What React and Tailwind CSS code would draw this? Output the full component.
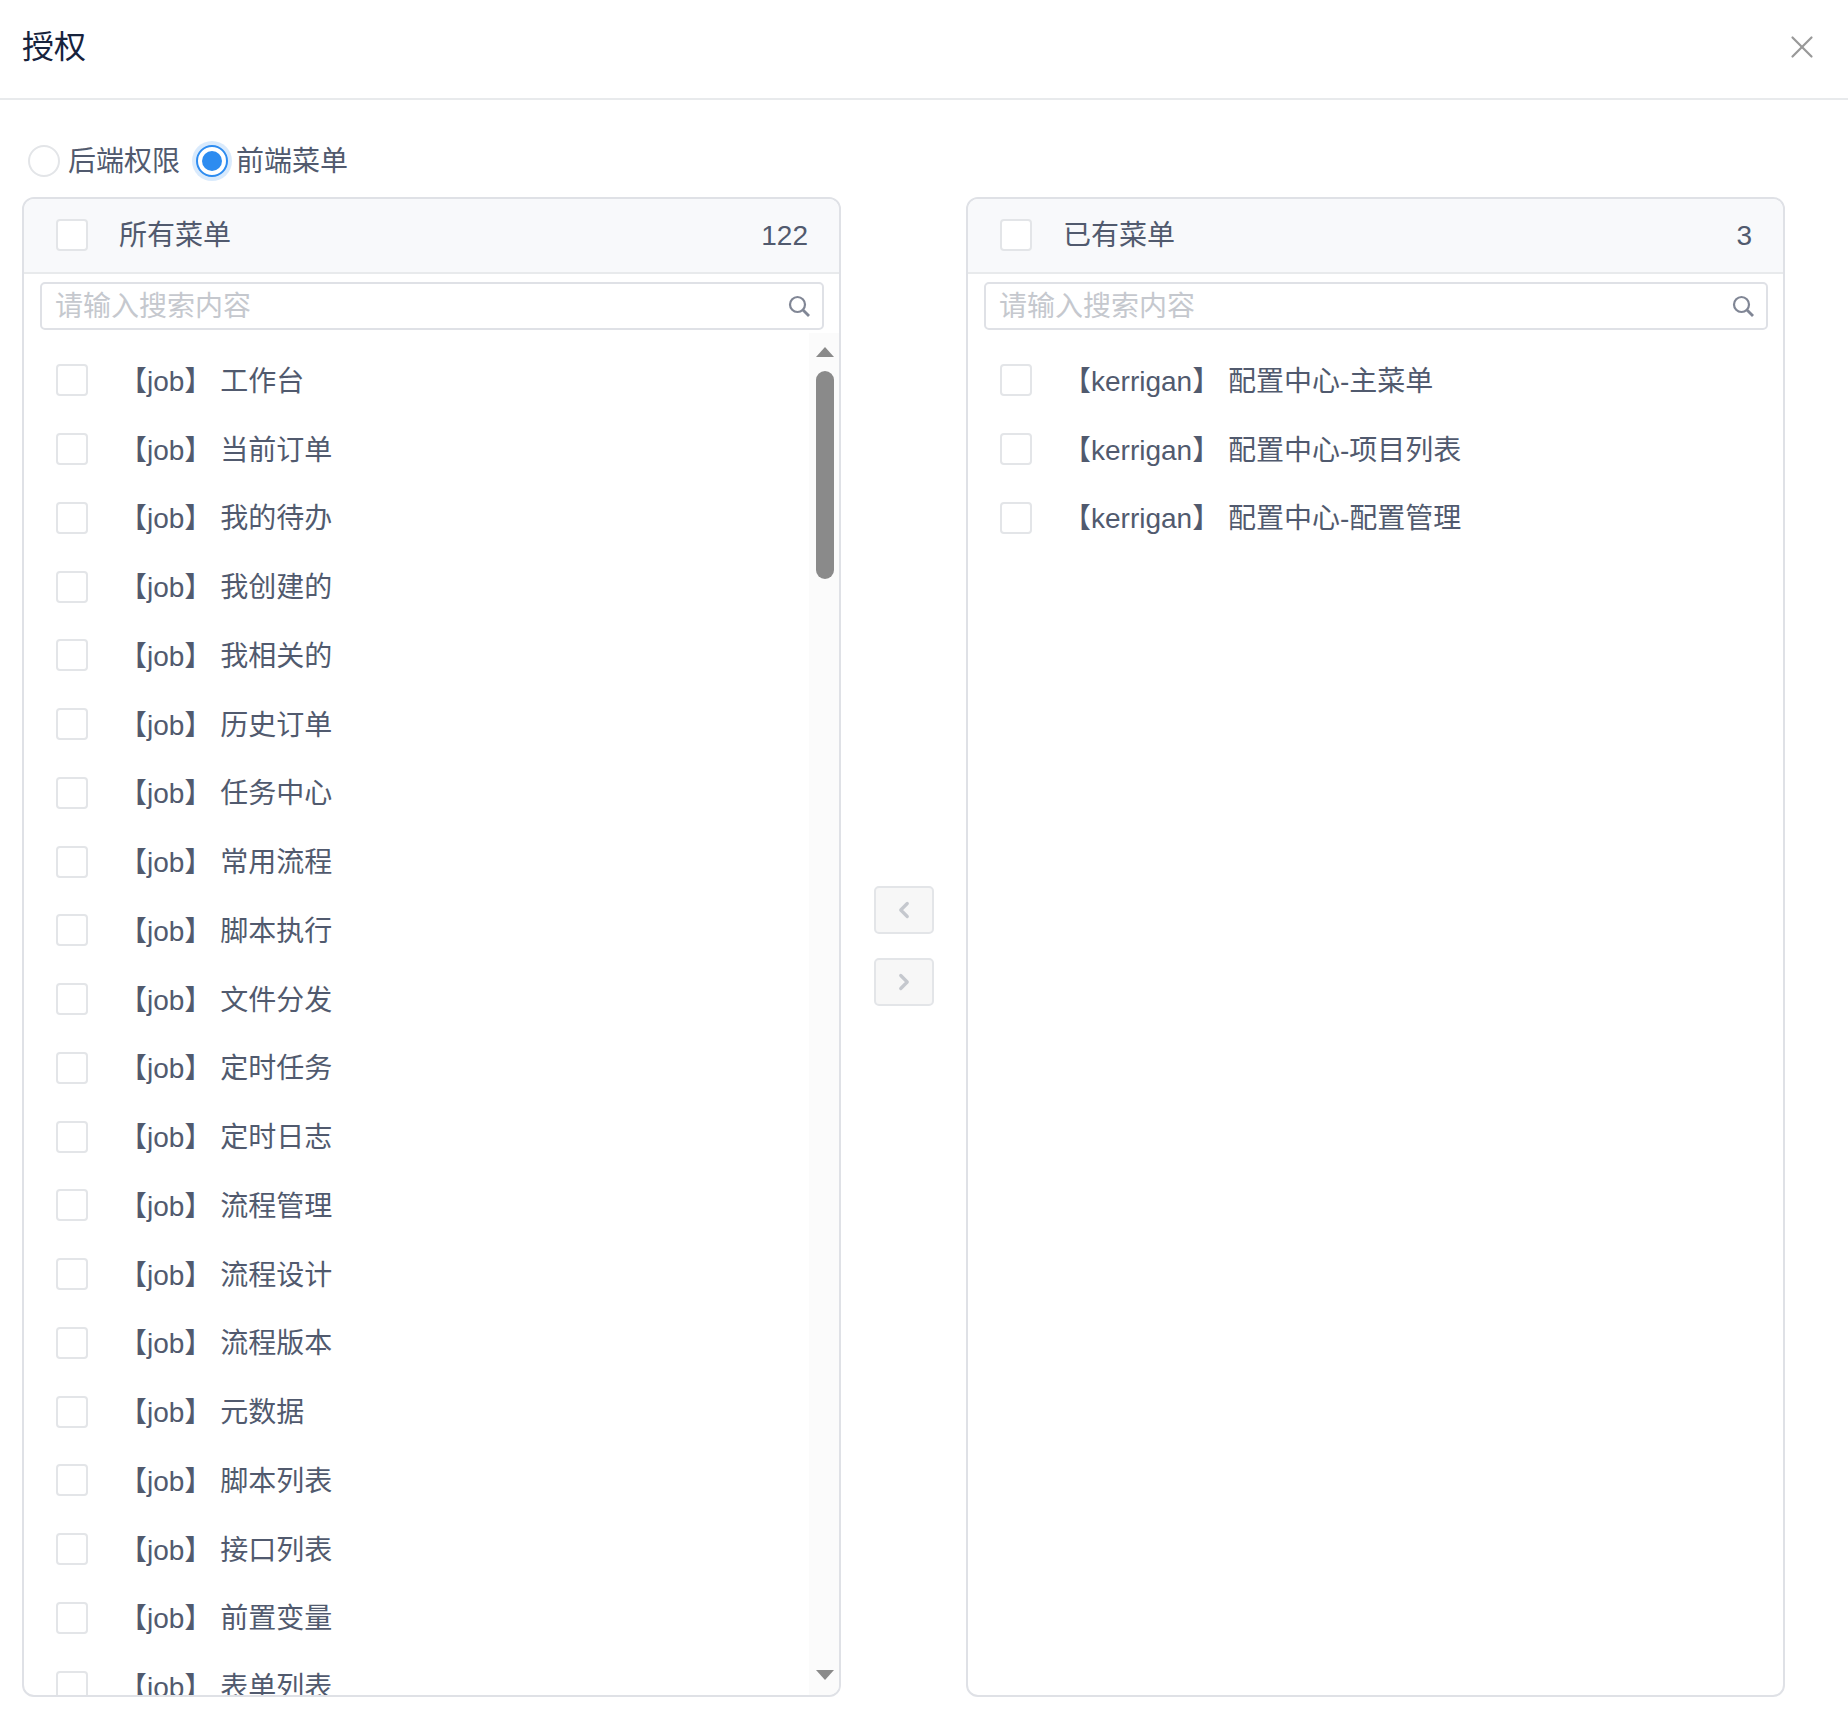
import React from "react";
import { ChevronLeft, ChevronRight, X } from "lucide-react";

const FONT = "font-['Liberation_Sans','Noto_Sans_CJK_SC',sans-serif]";

const allMenus = [
  "工作台", "当前订单", "我的待办", "我创建的", "我相关的", "历史订单", "任务中心",
  "常用流程", "脚本执行", "文件分发", "定时任务", "定时日志", "流程管理", "流程设计",
  "流程版本", "元数据", "脚本列表", "接口列表", "前置变量", "表单列表",
].map((name) => `【job】 ${name}`);

const ownedMenus = ["配置中心-主菜单", "配置中心-项目列表", "配置中心-配置管理"].map(
  (name) => `【kerrigan】 ${name}`
);

const Checkbox = ({ className = "" }) => (
  <span className={`block w-[32px] h-[32px] shrink-0 bg-white border-2 border-[#e3e5e8] rounded-[4px] ${className}`} />
);

const SearchIcon = () => (
  <svg width="24" height="24" viewBox="0 0 24 24" fill="none" stroke="#808695" strokeWidth="2.2">
    <circle cx="10.5" cy="10.5" r="7.5" />
    <path d="M16 16l6 6" strokeWidth="2.8" />
  </svg>
);

const Scrollbar = () => (
  <div className="w-[30px] shrink-0 bg-[#fbfbfb] flex flex-col items-center pt-[14px] pl-[2px]">
    <span className="w-0 h-0 border-x-[9px] border-x-transparent border-b-[10px] border-b-[#8a8a8a]" />
    <span className="block w-[18px] h-[208px] mt-[14px] rounded-[9px] bg-[#8a8a8a]" />
    <span className="w-0 h-0 mt-auto mb-[15px] border-x-[9px] border-x-transparent border-t-[10px] border-t-[#8a8a8a]" />
  </div>
);

const Panel = ({ title, count, items, scroll }) => (
  <div className="w-[819px] h-[1500px] flex flex-col border-2 border-[#dfe1e6] rounded-[12px] overflow-hidden">
    <div className="h-[75px] shrink-0 flex items-center pl-[32px] pr-[31px] bg-[#f8f9fb] border-b-2 border-[#e8eaec]">
      <Checkbox className="mb-[2px]" />
      <span className="ml-[31px] text-[28px] text-[#515a6e]">{title}</span>
      <span className="ml-auto text-[28px] text-[#515a6e]">{count}</span>
    </div>
    <div className="shrink-0 pl-[16px] pr-[15px] pt-[8px]">
      <div className="h-[48px] flex items-center pl-[13px] pr-[11px] border-2 border-[#dfe1e6] rounded-[5px] bg-white">
        <input
          className="flex-1 min-w-0 pt-[2px] text-[28px] bg-transparent outline-none placeholder:text-[#c5c8ce]"
          placeholder="请输入搜索内容"
        />
        <SearchIcon />
      </div>
    </div>
    <div className="flex-1 min-h-0 flex pt-[3px]">
      <ul className="flex-1 min-w-0 overflow-hidden pt-[13px]">
        {items.map((item) => (
          <li key={item} className="h-[68.75px] flex items-center pl-[32px]">
            <Checkbox />
            <span className="ml-[31px] pt-[3px] text-[28px] text-[#515a6e] whitespace-pre">{item}</span>
          </li>
        ))}
      </ul>
      {scroll && <Scrollbar />}
    </div>
  </div>
);

const MoveButton = ({ children }) => (
  <button className="w-[60px] h-[48px] flex items-center justify-center bg-[#f7f7f7] border-2 border-[#e3e5e8] rounded-[5px] text-[#c5c8ce]">
    {children}
  </button>
);

export default function App() {
  return (
    <div className={`${FONT} w-[1848px] h-[1718px] bg-white overflow-hidden`}>
      {/* Header */}
      <div className="h-[100px] flex items-center justify-between pl-[22px] pr-[27px] pb-[5px] border-b-2 border-[#e8eaec]">
        <h1 className="text-[32px] text-[#17233d]">授权</h1>
        <X size={38} strokeWidth={1.4} className="text-[#999999]" />
      </div>

      {/* Radio group */}
      <div className="h-[97px] flex items-center pl-[28px] pt-[24px] text-[28px] text-[#515a6e]">
        <span className="w-[32px] h-[32px] rounded-full border-2 border-[#e3e5e8] bg-white" />
        <span className="ml-[8px] pt-[2px]">后端权限</span>
        <span className="ml-[16px] w-[32px] h-[32px] flex items-center justify-center rounded-full border-2 border-[#2d8cf0] bg-white shadow-[0_0_0_4px_rgba(45,140,240,0.18)]">
          <span className="block w-[20px] h-[20px] rounded-full bg-[#2d8cf0]" />
        </span>
        <span className="ml-[8px] pt-[2px]">前端菜单</span>
      </div>

      {/* Transfer */}
      <div className="flex pl-[22px]">
        <Panel title="所有菜单" count="122" items={allMenus} scroll />
        <div className="w-[125px] pb-[2px] flex flex-col items-center justify-center gap-[24px]">
          <MoveButton>
            <ChevronLeft size={26} strokeWidth={3} />
          </MoveButton>
          <MoveButton>
            <ChevronRight size={26} strokeWidth={3} />
          </MoveButton>
        </div>
        <Panel title="已有菜单" count="3" items={ownedMenus} />
      </div>
    </div>
  );
}
